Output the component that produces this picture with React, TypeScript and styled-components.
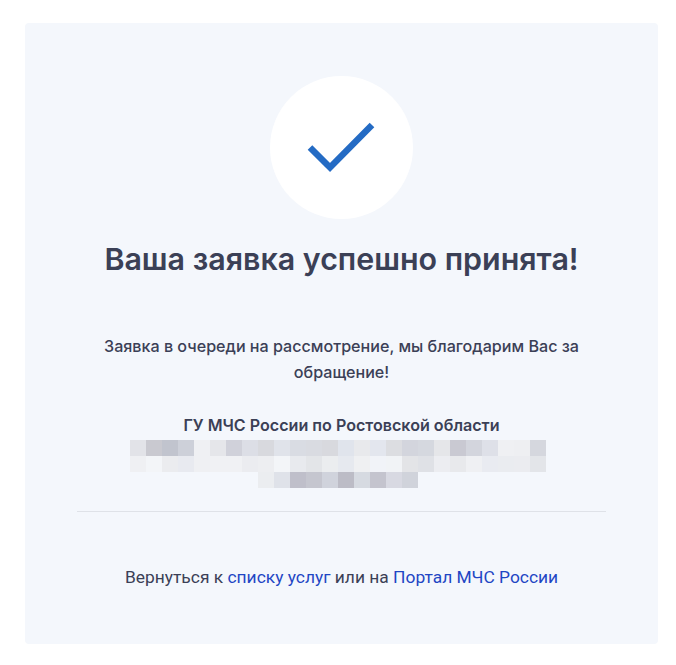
import React from 'react'
import styled, { createGlobalStyle } from 'styled-components'

const GlobalStyle = createGlobalStyle`
  html, body {
    margin: 0;
    padding: 0;
    background: #fff;
  }
  body {
    font-family: Roboto, "Liberation Sans", sans-serif;
    color: #3b4056;
  }
`

const blurred = [
  ['#e2e3e8', '#c9c9d0', '#c1c4ce', '#cdd0d9', '#eff0f3', '#e5e6ea', '#d0d1da', '#dcdee6', '#d8d9de', '#e0e3ea', '#d9dce3', '#d9dbe1', '#d8d9de', '#e0e4ec', '#e8e9ec', '#e3e6ee', '#dcdde1', '#d3d5dd', '#d5d8df', '#e5e6e9', '#c9c9d2', '#d3d5dd', '#dee0e8', '#eff0f3', '#eeeff2', '#d5d7de'],
  ['#eff0f3', '#f3f5f8', '#ebecef', '#e8eaf0', '#eff0f3', '#f0f1f4', '#f0f1f4', '#ebecf0', '#edeef1', '#f3f5f8', '#e8eaee', '#e3e5e8', '#ebedef', '#e6e9ef', '#eff0f2', '#f1f3f8', '#f1f3f6', '#e3e4e7', '#dfe1e6', '#ecedf1', '#e8e9ec', '#eff0f3', '#e9ebf1', '#eaecf0', '#ebecf0', '#e3e5e9'],
  ['#ebedf0', '#dfe2e9', '#bfbfca', '#c5c6cf', '#d0d3dc', '#bcbcc6', '#d6dae1', '#c4c4ce', '#d8d9e2', '#d0d3db'],
]

export default function App() {
  return (
    <Page>
      <GlobalStyle />
      <Card>
        <Circle>
          <Check width="68" height="52" viewBox="0 0 68 52" fill="none">
            <path d="M3 25.5L23 45.5L65 3" stroke="#246bc4" strokeWidth="6.5" />
          </Check>
        </Circle>
        <Title>Ваша заявка успешно принята!</Title>
        <Message>Заявка в очереди на рассмотрение, мы благодарим Вас за обращение!</Message>
        <OrgName>ГУ МЧС России по Ростовской области</OrgName>
        <Mosaic>
          {blurred.map((row, i) => (
            <MosaicRow key={i}>
              {row.map((color, j) => (
                <MosaicCell key={j} $color={color} />
              ))}
            </MosaicRow>
          ))}
        </Mosaic>
        <Divider />
        <Footer>
          Вернуться к <FooterLink href="#">списку услуг</FooterLink> или на{' '}
          <FooterLink href="#">Портал МЧС России</FooterLink>
        </Footer>
      </Card>
    </Page>
  )
}

const Page = styled.div`
  width: 676px;
  height: 665px;
  box-sizing: border-box;
  padding: 23px 18px 21px 25px;
`
const Card = styled.div`
  display: flex;
  flex-direction: column;
  align-items: center;
  height: 621px;
  box-sizing: border-box;
  padding: 53px 52px 0;
  background: #f4f7fc;
  border-radius: 4px;
`
const Circle = styled.div`
  display: flex;
  align-items: center;
  justify-content: center;
  flex: none;
  width: 143px;
  height: 143px;
  border-radius: 50%;
  background: #fff;
`
const Check = styled.svg`
  margin-right: 2px;
`
const Title = styled.h1`
  margin: 20px 0 0;
  font-family: Inter, Roboto, sans-serif;
  font-size: 30.4px;
  line-height: 40px;
  font-weight: 600;
  text-align: center;
  color: #3b4056;
`
const Message = styled.p`
  width: 500px;
  margin: 54px 0 0;
  font-family: Inter, Roboto, sans-serif;
  font-size: 16.13px;
  line-height: 26px;
  font-weight: 500;
  text-align: center;
  color: #3b4056;
`
const OrgName = styled.div`
  margin-top: 28px;
  font-family: Inter, Roboto, sans-serif;
  font-size: 16.1px;
  line-height: 24px;
  font-weight: 600;
  text-align: center;
  color: #3b4056;
`
const Mosaic = styled.div`
  display: flex;
  flex-direction: column;
  align-items: center;
  margin: 3px 8px 0 0;
`
const MosaicRow = styled.div`
  display: flex;
`
const MosaicCell = styled.div<{ $color: string }>`
  width: 16px;
  height: 16px;
  background: ${(p) => p.$color};
`
const Divider = styled.hr`
  width: 100%;
  height: 1px;
  margin: 23px 0 0;
  border: 0;
  background: #dfe2e8;
`
const Footer = styled.div`
  margin-top: 53px;
  font-size: 17.4px;
  line-height: 24px;
  text-align: center;
  color: #3b4056;
`
const FooterLink = styled.a`
  color: #1f46c4;
  text-decoration: none;
`
